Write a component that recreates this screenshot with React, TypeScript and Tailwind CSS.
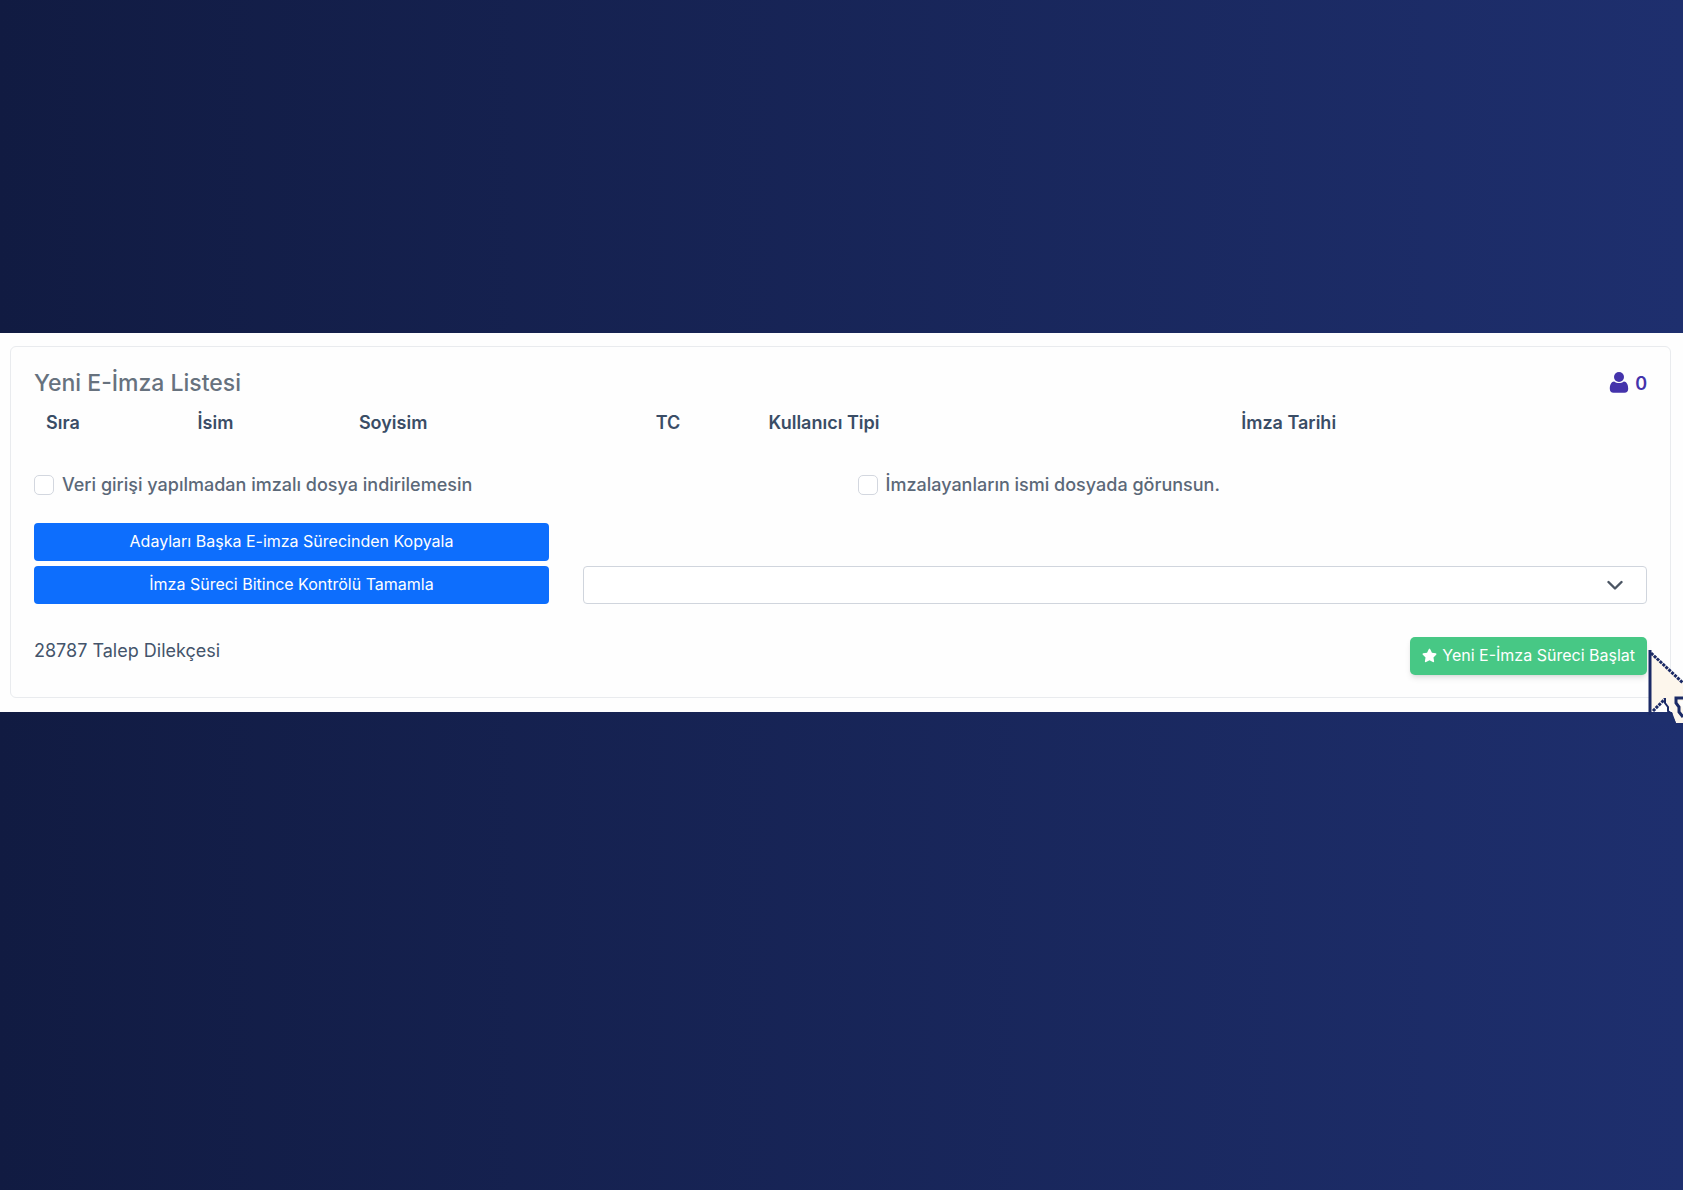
import { FaStar } from "react-icons/fa";

interface Column {
  label: string;
  width: string;
}

const columns: Column[] = [
  { label: "Sıra", width: "w-[9.4%]" },
  { label: "İsim", width: "w-[10%]" },
  { label: "Soyisim", width: "w-[18.4%]" },
  { label: "TC", width: "w-[7%]" },
  { label: "Kullanıcı Tipi", width: "w-[29.3%]" },
  { label: "İmza Tarihi", width: "w-[25.9%]" },
];

const options = [
  "Veri girişi yapılmadan imzalı dosya indirilemesin",
  "İmzalayanların ismi dosyada görunsun.",
];

const copyButton = "h-[38px] w-full rounded-[4px] bg-[#0d6efd] pb-[2px] text-base text-white";

const UserIcon = () => (
  <svg className="h-[22px] w-5" viewBox="0 0 20 22" fill="currentColor" aria-hidden="true">
    <circle cx="10" cy="5" r="5" />
    <path d="M5.2 9.4C1.6 9.8.8 13.6.8 16.8c0 2.5 1.4 3.9 3.7 3.9h11c2.3 0 3.7-1.4 3.7-3.9 0-3.2-.8-7-4.4-7.4-1.4 1.1-3 1.6-4.8 1.6s-3.4-.5-4.8-1.6Z" />
  </svg>
);

// Pixel style pointer, cut off by the window edge
const Cursor = () => (
  <svg
    className="absolute top-3 left-full h-[76px] w-9"
    viewBox="0 0 36 76"
    fill="none"
    aria-hidden="true"
  >
    <path d="M3 2 36 33V74H29L18 50 5 63H3Z" fill="#fdf6ec" />
    <path d="M6 62 18 50 22 60 26 63H6Z" fill="#fefefe" />
    <path d="M5 63h20l4 11H5Z" fill="#1e2f6d" />
    <path d="M18 50 23 56 30 74H36V49H26Z" fill="#fdf6ec" />
    <path d="M3 1V66" stroke="#1b2a66" strokeWidth="3" />
    <path d="M4 4 36 34" stroke="#1b2a66" strokeWidth="3" strokeDasharray="3 1" />
    <path d="M6 62 18 50" stroke="#1b2a66" strokeWidth="3" strokeDasharray="3 1" />
    <path d="M18 49V54L21 58V62L25 65" stroke="#1b2a66" strokeWidth="2" />
    <path d="M36 49H29V54L32 58V63L36 68" stroke="#1b2a66" strokeWidth="3" />
    <path d="M36 52H32L36 61Z" fill="#fefefe" />
  </svg>
);

const App = () => {
  return (
    <main className="min-h-screen bg-linear-to-r from-[#111b42] to-[#1e2f6e] pt-[333px] font-['Inter',sans-serif] text-[#44546b]">
      <div className="overflow-x-clip bg-[#fefefe] pt-[13px] pr-3 pb-[14px] pl-[10px]">
        <section className="rounded-[6px] border border-[#e9ebee] px-[23px] pt-5 pb-[22px]">
          {/* Card Header */}
          <div className="flex items-center justify-between">
            <h1 className="text-[23px] leading-8 font-medium text-[#67727e]">Yeni E-İmza Listesi</h1>
            <span className="flex items-center gap-[6px] text-[18px] font-semibold text-[#4433ab]">
              <UserIcon />0
            </span>
          </div>

          {/* Signers */}
          <table className="w-full table-fixed text-left text-[18px] leading-[27px]">
            <thead>
              <tr>
                {columns.map((column) => (
                  <th
                    key={column.label}
                    className={`${column.width} px-3 py-[10px] font-semibold text-[#3a4d66]`}
                  >
                    {column.label}
                  </th>
                ))}
              </tr>
            </thead>
          </table>

          {/* Options */}
          <div className="mt-[25px] grid grid-cols-2 gap-[34px] text-[18px] leading-7 font-medium text-[#5b6878]">
            {options.map((option) => (
              <label key={option} className="flex items-center gap-2">
                <input
                  type="checkbox"
                  className="size-5 appearance-none rounded-[5px] border border-[#d3d7df] bg-white checked:bg-[#0d6efd]"
                />
                {option}
              </label>
            ))}
          </div>

          {/* Process */}
          <div className="mt-6 grid grid-cols-3 items-end gap-[34px]">
            <div className="flex flex-col gap-[5px]">
              <button className={copyButton}>Adayları Başka E-imza Sürecinden Kopyala</button>
              <button className={copyButton}>İmza Süreci Bitince Kontrölü Tamamla</button>
            </div>
            <div className="relative col-span-2">
              <select
                aria-label="Kontrol"
                className="block h-[38px] w-full appearance-none rounded-[4px] border border-[#d0d5dd] bg-white px-4"
              />
              <svg
                className="pointer-events-none absolute top-[11px] right-6 size-4"
                viewBox="0 0 16 16"
                fill="none"
                stroke="#4b5563"
                strokeWidth="2.4"
                strokeLinecap="round"
                strokeLinejoin="round"
              >
                <path d="m1.5 5 6.5 6.5L14.5 5" />
              </svg>
            </div>
          </div>

          {/* Footer */}
          <div className="mt-[33px] flex items-start justify-between">
            <p className="text-[18px] leading-7">28787 Talep Dilekçesi</p>
            <div className="relative">
              <button className="flex h-[38px] items-center gap-[5px] rounded-[5px] bg-[#47c885] px-3 pb-[2px] text-base text-white shadow-md">
                <FaStar size={15} />
                Yeni E-İmza Süreci Başlat
              </button>
              <Cursor />
            </div>
          </div>
        </section>
      </div>
    </main>
  );
};

export default App;
